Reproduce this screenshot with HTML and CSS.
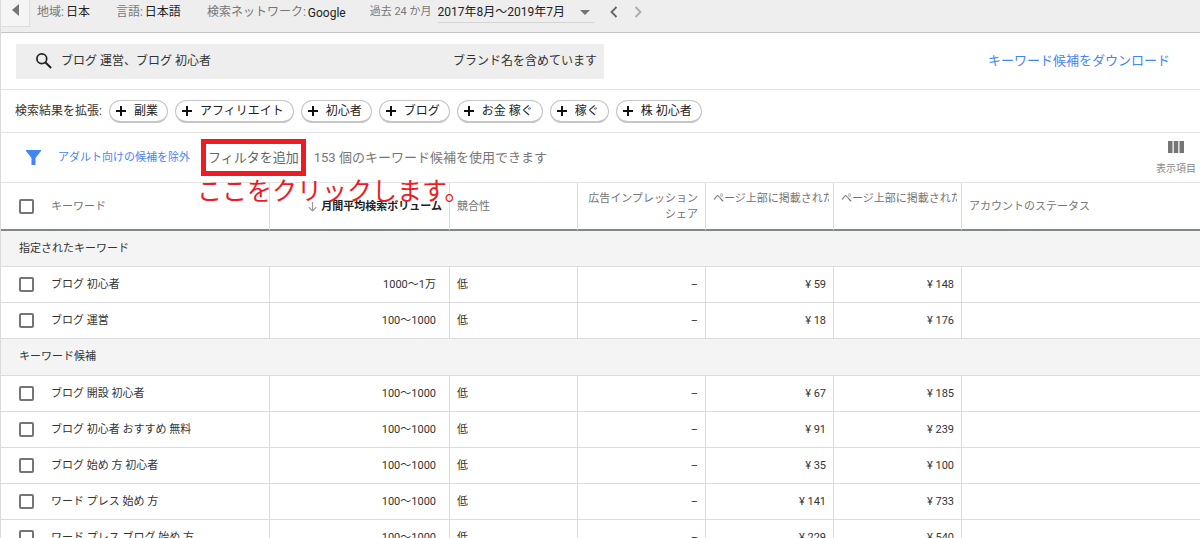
FILE: index.html
```html
<!DOCTYPE html>
<html lang="ja">
<head>
<meta charset="utf-8">
<title>キーワード候補</title>
<link rel="stylesheet" href="styles.css">
</head>
<body>
<header class="topbar">
  <button class="collapse" type="button" aria-label="メニューを開く"><svg width="7" height="12" viewBox="0 0 7 12"><path d="M7 0v12L0 6z" fill="#757575"/></svg></button>
  <div class="setting setting-region"><span class="label">地域:</span><span>日本</span></div>
  <div class="setting setting-language"><span class="label">言語:</span><span>日本語</span></div>
  <div class="setting setting-network"><span class="label">検索ネットワーク:</span><span class="network">Google</span></div>
  <div class="setting">
    <label class="period-label" for="period">過去 24 か月</label>
    <span class="period">
      <select id="period"><option>2017年8月〜2019年7月</option></select>
      <svg class="caret" width="10" height="5" viewBox="0 0 10 5"><path d="M0 0h10L5 5z" fill="#757575"/></svg>
    </span>
  </div>
  <button class="step" type="button" aria-label="前の期間"><svg width="8" height="12" viewBox="0 0 8 12"><path d="M6.500 1L1.500 6l5 5" fill="none" stroke="#666" stroke-width="1.800"/></svg></button>
  <button class="step" type="button" aria-label="次の期間"><svg width="8" height="12" viewBox="0 0 8 12"><path d="M1.500 1l5 5-5 5" fill="none" stroke="#aaa" stroke-width="1.800"/></svg></button>
</header>
<main>
  <section class="search-row">
    <button class="search" type="button">
      <svg width="18" height="18" viewBox="0 0 18 18" fill="none" stroke="#222"><circle cx="6.800" cy="6.800" r="4.900" stroke-width="1.700"/><path d="M10.500 10.500l5.600 5.600" stroke-width="2.100"/></svg>
      <span>ブログ 運営、ブログ 初心者</span>
      <span class="brand">ブランド名を含めています</span>
    </button>
    <a class="download" href="#">キーワード候補をダウンロード</a>
  </section>
  <section class="expand-row">
    <span class="expand-label">検索結果を拡張:</span>
    <button class="chip" type="button"><svg class="plus" viewBox="0 0 10 10"><path d="M5 0v10M0 5h10"/></svg>副業</button>
    <button class="chip" type="button"><svg class="plus" viewBox="0 0 10 10"><path d="M5 0v10M0 5h10"/></svg>アフィリエイト</button>
    <button class="chip" type="button"><svg class="plus" viewBox="0 0 10 10"><path d="M5 0v10M0 5h10"/></svg>初心者</button>
    <button class="chip" type="button"><svg class="plus" viewBox="0 0 10 10"><path d="M5 0v10M0 5h10"/></svg>ブログ</button>
    <button class="chip" type="button"><svg class="plus" viewBox="0 0 10 10"><path d="M5 0v10M0 5h10"/></svg>お金 稼ぐ</button>
    <button class="chip" type="button"><svg class="plus" viewBox="0 0 10 10"><path d="M5 0v10M0 5h10"/></svg>稼ぐ</button>
    <button class="chip" type="button"><svg class="plus" viewBox="0 0 10 10"><path d="M5 0v10M0 5h10"/></svg>株 初心者</button>
  </section>
  <section class="filter-row">
    <svg class="funnel" width="15" height="15" viewBox="0 0 15 15"><path d="M0 0h15v1L9.500 8v7h-4V8L0 1z" fill="#4285f4"/></svg>
    <button class="exclude" type="button">アダルト向けの候補を除外</button>
    <div class="callout">
      <button class="add-filter" type="button">フィルタを追加</button>
      <p class="note">ここをクリックします。</p>
    </div>
    <span class="count">153 個のキーワード候補を使用できます</span>
    <button class="columns" type="button">
      <svg width="16" height="12" viewBox="0 0 16 12" fill="#757575"><path d="M0 0h4.500v12H0zM5.750 0h4.500v12h-4.500zM11.500 0H16v12h-4.500z"/></svg>
      <span>表示項目</span>
    </button>
  </section>
  <table>
    <colgroup><col class="c-check"><col class="c-keyword"><col class="c-volume"><col class="c-std"><col class="c-std"><col class="c-std"><col class="c-std"><col></colgroup>
    <thead>
      <tr>
        <th class="check"><input type="checkbox" aria-label="すべて選択"></th>
        <th class="keyword">キーワード</th>
        <th class="sorted"><svg width="9" height="10" viewBox="0 0 9 10"><path d="M4.500 0v9M.7 5.200l3.800 3.800 3.800-3.800" fill="none" stroke="#999" stroke-width="1.200"/></svg>月間平均検索ボリューム</th>
        <th>競合性</th>
        <th class="num top">広告インプレッション<br>シェア</th>
        <th class="top clipped"><div class="clip">ページ上部に掲載された</div></th>
        <th class="top clipped"><div class="clip">ページ上部に掲載された</div></th>
        <th>アカウントのステータス</th>
      </tr>
    </thead>
    <tbody>
      <tr class="group"><th colspan="8">指定されたキーワード</th></tr>
      <tr><td class="check"><input type="checkbox" id="k1"></td><td class="keyword"><label for="k1">ブログ 初心者</label></td><td class="volume">1000〜1万</td><td>低</td><td class="num">–</td><td class="num">¥ 59</td><td class="num">¥ 148</td><td></td></tr>
      <tr><td class="check"><input type="checkbox" id="k2"></td><td class="keyword"><label for="k2">ブログ 運営</label></td><td class="volume">100〜1000</td><td>低</td><td class="num">–</td><td class="num">¥ 18</td><td class="num">¥ 176</td><td></td></tr>
      <tr class="group"><th colspan="8">キーワード候補</th></tr>
      <tr><td class="check"><input type="checkbox" id="k3"></td><td class="keyword"><label for="k3">ブログ 開設 初心者</label></td><td class="volume">100〜1000</td><td>低</td><td class="num">–</td><td class="num">¥ 67</td><td class="num">¥ 185</td><td></td></tr>
      <tr><td class="check"><input type="checkbox" id="k4"></td><td class="keyword"><label for="k4">ブログ 初心者 おすすめ 無料</label></td><td class="volume">100〜1000</td><td>低</td><td class="num">–</td><td class="num">¥ 91</td><td class="num">¥ 239</td><td></td></tr>
      <tr><td class="check"><input type="checkbox" id="k5"></td><td class="keyword"><label for="k5">ブログ 始め 方 初心者</label></td><td class="volume">100〜1000</td><td>低</td><td class="num">–</td><td class="num">¥ 35</td><td class="num">¥ 100</td><td></td></tr>
      <tr><td class="check"><input type="checkbox" id="k6"></td><td class="keyword"><label for="k6">ワード プレス 始め 方</label></td><td class="volume">100〜1000</td><td>低</td><td class="num">–</td><td class="num">¥ 141</td><td class="num">¥ 733</td><td></td></tr>
      <tr><td class="check"><input type="checkbox" id="k7"></td><td class="keyword"><label for="k7">ワード プレス ブログ 始め 方</label></td><td class="volume">100〜1000</td><td>低</td><td class="num">–</td><td class="num">¥ 229</td><td class="num">¥ 540</td><td></td></tr>
    </tbody>
  </table>
</main>
</body>
</html>
```
FILE: styles.css
```css
* { box-sizing: border-box; }
body {
  margin: 0;
  height: 100vh;
  overflow: hidden;
  border-left: 1px solid #dadada;
  background: #fff;
  color: #333;
  font: 12px/16px Roboto, "Noto Sans CJK JP", sans-serif;
}
button, select { font: inherit; color: inherit; border: 0; padding: 0; background: none; cursor: pointer; }
svg { display: block; flex: none; }

.topbar { display: flex; align-items: flex-start; height: 33px; background: #eee; border-bottom: 1px solid #c4c4c4; white-space: nowrap; }
.collapse { width: 29px; height: 27px; padding: 4px 11px 11px; background: #f5f5f5; border-right: 1px solid #ddd; border-bottom: 1px solid #ddd; }
.setting { display: flex; align-items: flex-start; gap: 2px; padding-top: 4px; color: #222; }
.setting-region { margin: 0 26px 0 7px; }
.setting-language { margin-right: 26px; }
.setting-network { margin-right: 24px; }
.label, .period-label { color: #777; }
.network { padding-top: 1px; }
.period-label { font-size: 11px; margin-right: 4px; }
.period { display: flex; align-items: center; position: relative; height: 19px; padding-bottom: 3px; border-bottom: 1px solid #d4d4d4; }
.period select { appearance: none; width: 156px; height: 16px; }
.caret { position: absolute; right: 4px; top: 6px; pointer-events: none; }
.step { margin-left: 16px; padding-top: 6px; }

.search-row { display: flex; align-items: center; justify-content: space-between; height: 57px; padding: 0 30px 0 15px; border-bottom: 1px solid #e4e4e4; }
.search { display: flex; align-items: center; gap: 8px; flex: 0 1 588px; height: 35px; padding: 0 7px 0 19px; background: #eee; white-space: nowrap; }
.brand { margin-left: auto; }
.download { color: #4285f4; font-size: 13px; text-decoration: none; }

.expand-row { display: flex; align-items: center; gap: 7px; height: 43px; padding-left: 14px; border-bottom: 1px solid #e4e4e4; white-space: nowrap; }
.chip { display: flex; align-items: center; gap: 8px; height: 23px; padding: 1px 9px 0 6px; border: 1px solid #c6c6c6; border-bottom-width: 2px; border-radius: 12px; color: #222; }
.plus { width: 10px; height: 10px; stroke: #111; stroke-width: 2; }

.filter-row { display: flex; align-items: center; height: 50px; border-bottom: 1px solid #e4e4e4; white-space: nowrap; }
.funnel { margin: 0 17px 0 25px; }
.exclude { color: #4285f4; font-size: 11px; }
.callout { position: relative; margin: 0 8px 0 11px; }
.add-filter { height: 37px; padding: 0 2px; border: 5px solid #ed1c24; color: #666; font-size: 13px; }
.note { position: absolute; top: 34px; left: -4px; margin: 0; color: #ed1c24; font: 25px/32px "Noto Sans CJK JP", sans-serif; }
.count { color: #777; font-size: 13px; }
.columns { display: flex; flex-direction: column; align-items: center; gap: 8px; margin-left: auto; padding: 2px 4px 0 0; color: #888; font-size: 10px; }

table { width: 100%; table-layout: fixed; border-collapse: separate; border-spacing: 0; font-size: 11px; }
.c-check { width: 42px; }
.c-keyword { width: 227px; }
.c-volume { width: 180px; }
.c-std { width: 128px; }
th, td { height: 36px; padding: 0 7px; border-right: 1px solid #dadce0; border-bottom: 1px solid #dadce0; font-weight: 400; text-align: left; vertical-align: middle; white-space: nowrap; }
th:last-child, td:last-child { border-right: 0; }
thead th { height: 48px; padding-top: 1px; border-bottom: 2px solid #80868b; color: #757575; }
thead .top { padding-top: 8px; vertical-align: top; }
thead .clipped { padding-right: 4px; }
.clip { overflow: hidden; }
.check { padding: 0 0 0 18px; border-right: 0; }
.keyword { padding-left: 8px; }
.num { text-align: right; }
.volume { padding-right: 13px; text-align: right; }
thead .sorted { color: #222; font-weight: 700; text-align: right; }
.sorted svg { display: inline-block; margin-right: 4px; vertical-align: middle; }
.group th { height: 36px; padding-left: 18px; background: #f4f4f4; }
.group ~ .group th { height: 37px; }
input[type="checkbox"] { appearance: none; display: block; width: 15px; height: 15px; margin: 0; border: 2px solid #757575; border-radius: 2px; background: #fff; }
```
